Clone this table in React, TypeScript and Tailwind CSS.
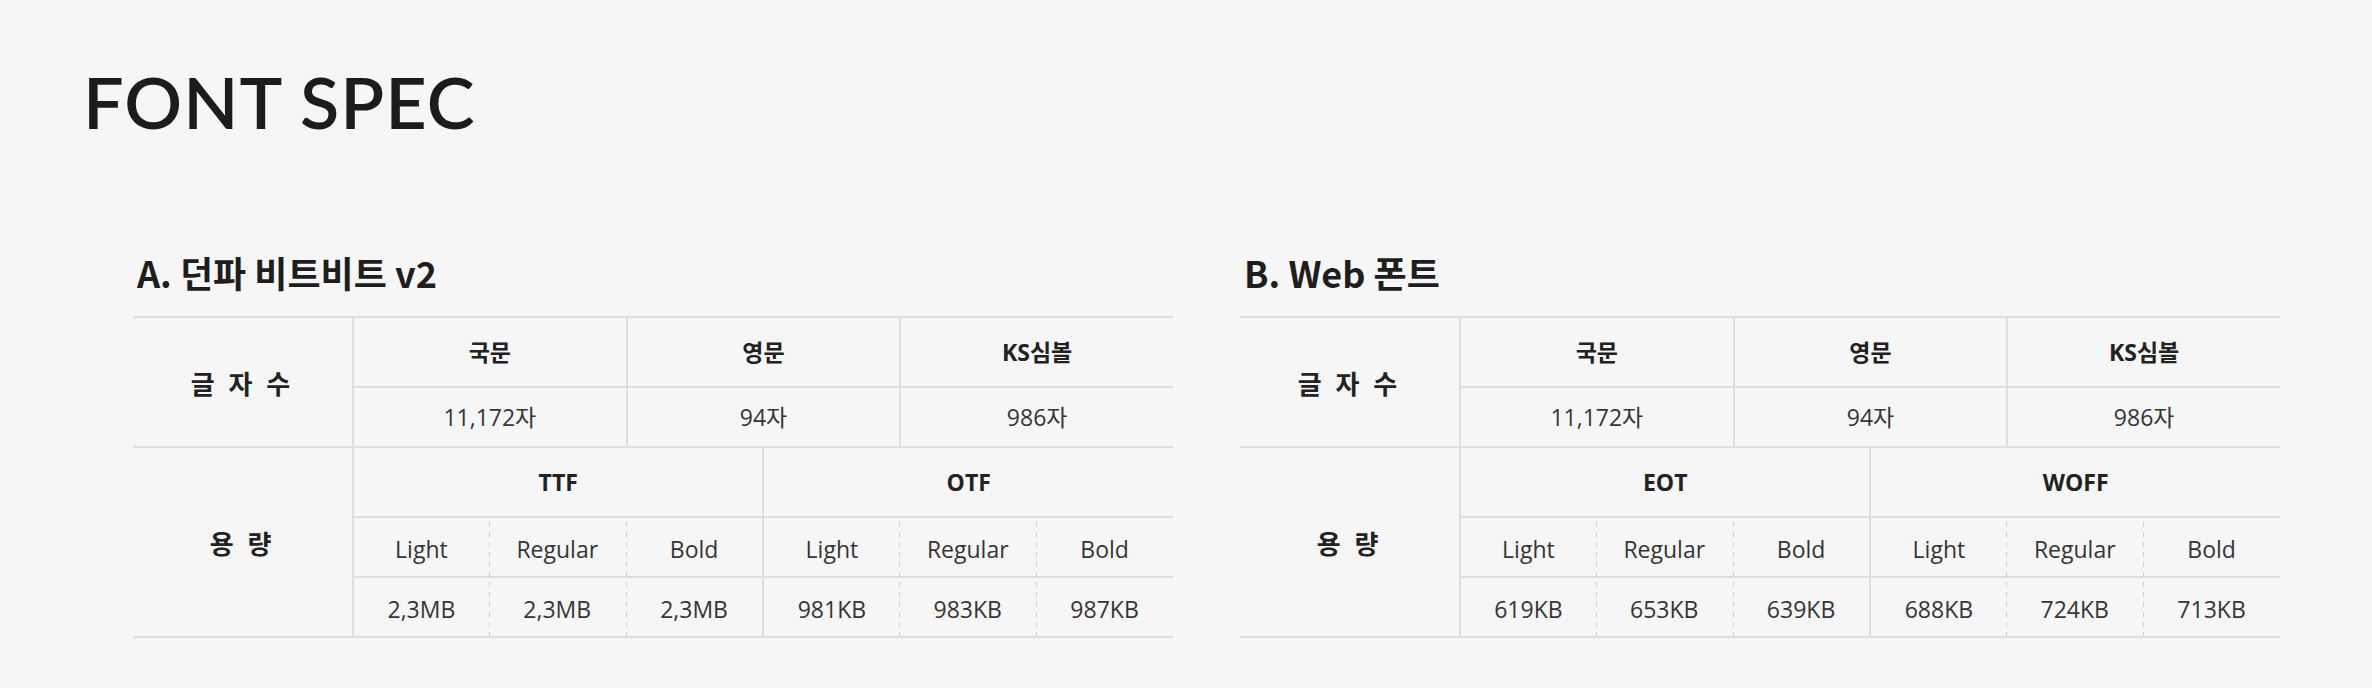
import React from "react";

type Sub = { name: string; size: string };

const solidL = "border-l-2 border-[#dcdfdf]";
const dashedL =
  "bg-[linear-gradient(to_bottom,#cfd1d1_50%,transparent_50%)] bg-[length:1px_10px] bg-repeat-y bg-left";
const bottom = "border-b-2 border-[#dcdfdf]";

function Cell({
  className,
  children,
}: {
  className: string;
  children: React.ReactNode;
}) {
  return (
    <div className={`flex items-center justify-center ${className}`}>
      {children}
    </div>
  );
}

function SpecTable({
  title,
  groups,
}: {
  title: string;
  groups: { label: string; subs: Sub[] }[];
}) {
  const starts = ["col-start-2", "col-start-5"];
  const subs = groups.flatMap((g) => g.subs);
  const head = "text-[23px] font-bold text-[#222]";
  const val = "text-[23px] text-[#353535]";
  const side =
    "text-[26px] font-bold tracking-[4px] text-[#222] font-['Noto_Sans_CJK_KR',sans-serif]";
  return (
    <div className="w-[1040px]">
      <h2 className="pl-[4px] text-[36px] leading-[40px] font-bold text-[#1e1e1e] font-['Noto_Sans_CJK_KR',sans-serif]">
        {title}
      </h2>
      <div className="mt-[24px] grid grid-cols-[219px_repeat(6,1fr)] grid-rows-[70px_60px_70px_60px_60px] border-t-2 border-[#dcdfdf] font-['Open_Sans','Noto_Sans_CJK_KR',sans-serif]">
        <Cell className={`col-start-1 row-start-1 row-span-2 ${bottom} ${side}`}>
          글 자 수
        </Cell>
        <Cell className={`col-start-2 col-span-2 row-start-1 ${solidL} ${bottom} ${head}`}>
          국문
        </Cell>
        <Cell className={`col-start-4 col-span-2 row-start-1 ${solidL} ${bottom} ${head}`}>
          영문
        </Cell>
        <Cell className={`col-start-6 col-span-2 row-start-1 ${solidL} ${bottom} ${head}`}>
          KS심볼
        </Cell>
        <Cell className={`col-start-2 col-span-2 row-start-2 ${solidL} ${bottom} ${val}`}>
          11,172자
        </Cell>
        <Cell className={`col-start-4 col-span-2 row-start-2 ${solidL} ${bottom} ${val}`}>
          94자
        </Cell>
        <Cell className={`col-start-6 col-span-2 row-start-2 ${solidL} ${bottom} ${val}`}>
          986자
        </Cell>
        <Cell className={`col-start-1 row-start-3 row-span-3 ${bottom} ${side}`}>
          용 량
        </Cell>
        {groups.map((g, i) => (
          <Cell
            key={g.label}
            className={`${starts[i]} col-span-3 row-start-3 ${solidL} ${bottom} ${head}`}
          >
            {g.label}
          </Cell>
        ))}
        {subs.map((s, i) => (
          <Cell
            key={"n" + i}
            className={`row-start-4 pt-[5px] ${i % 3 === 0 ? solidL : dashedL} ${bottom} ${val}`}
          >
            {s.name}
          </Cell>
        ))}
        {subs.map((s, i) => (
          <Cell
            key={"s" + i}
            className={`row-start-5 pt-[5px] ${i % 3 === 0 ? solidL : dashedL} ${bottom} ${val}`}
          >
            {s.size}
          </Cell>
        ))}
      </div>
    </div>
  );
}

export default function App() {
  const w = (a: string, b: string, c: string): Sub[] => [
    { name: "Light", size: a },
    { name: "Regular", size: b },
    { name: "Bold", size: c },
  ];
  return (
    <div className="w-full h-[688px] bg-[#f6f6f6] pt-[65px]">
      <h1 className="pl-[83px] text-[72px] leading-[72px] font-semibold tracking-[1px] text-[#1c1c1c] font-['Lato',sans-serif]">
        FONT SPEC
      </h1>
      <div className="mt-[115px] pl-[133px] flex gap-[67px]">
        <SpecTable
          title="A. 던파 비트비트 v2"
          groups={[
            { label: "TTF", subs: w("2,3MB", "2,3MB", "2,3MB") },
            { label: "OTF", subs: w("981KB", "983KB", "987KB") },
          ]}
        />
        <SpecTable
          title="B. Web 폰트"
          groups={[
            { label: "EOT", subs: w("619KB", "653KB", "639KB") },
            { label: "WOFF", subs: w("688KB", "724KB", "713KB") },
          ]}
        />
      </div>
    </div>
  );
}
